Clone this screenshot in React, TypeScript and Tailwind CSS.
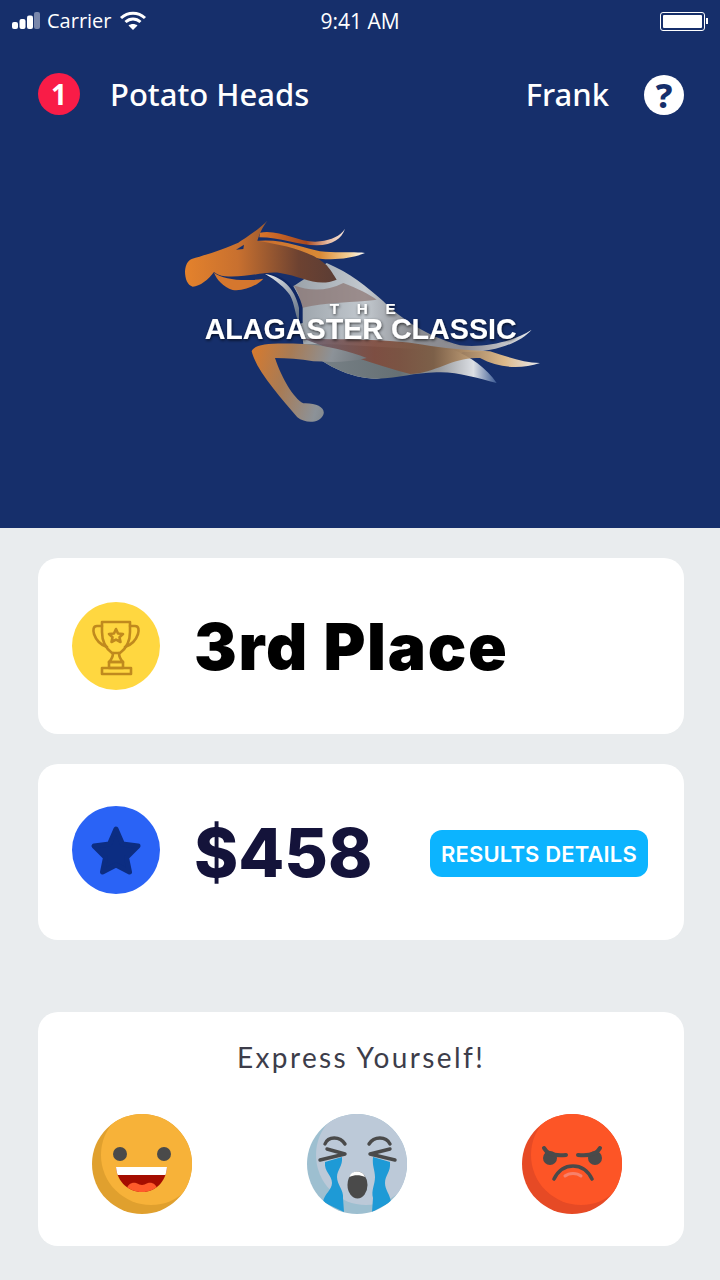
const FACE_DARK = "#4a4a4a";

function Horse() {
  return (
    <svg viewBox="0 0 1140 675" className="block w-[380px] h-[225px]">
      <defs>
        <linearGradient id="neck" x1="0" y1="0" x2="1" y2="0">
          <stop offset="0" stopColor="#e4822c" />
          <stop offset="0.35" stopColor="#c8702f" />
          <stop offset="0.75" stopColor="#6d4231" />
          <stop offset="1" stopColor="#5b3d35" />
        </linearGradient>
        <linearGradient id="maneA" x1="0" y1="0" x2="1" y2="0">
          <stop offset="0" stopColor="#d9762a" />
          <stop offset="0.55" stopColor="#a9491f" />
          <stop offset="0.8" stopColor="#e6b9a0" />
          <stop offset="1" stopColor="#f6e6dc" />
        </linearGradient>
        <linearGradient id="maneB" x1="0" y1="0" x2="1" y2="0">
          <stop offset="0" stopColor="#c9692b" />
          <stop offset="0.6" stopColor="#d98a36" />
          <stop offset="0.85" stopColor="#f3cf95" />
          <stop offset="1" stopColor="#ffffff" />
        </linearGradient>
        <linearGradient id="body" x1="0" y1="0" x2="1" y2="0">
          <stop offset="0" stopColor="#9aa2a9" />
          <stop offset="0.3" stopColor="#c3c9cf" />
          <stop offset="0.5" stopColor="#8b8d92" />
          <stop offset="0.72" stopColor="#8d8b90" />
          <stop offset="1" stopColor="#e6e9ed" />
        </linearGradient>
        <linearGradient id="belly" x1="0" y1="0" x2="1" y2="0">
          <stop offset="0" stopColor="#7b848a" />
          <stop offset="0.5" stopColor="#667074" />
          <stop offset="0.7" stopColor="#979a9e" />
          <stop offset="0.88" stopColor="#dcdfe4" />
          <stop offset="1" stopColor="#3b5a94" />
        </linearGradient>
        <linearGradient id="tail" x1="0" y1="0" x2="1" y2="0">
          <stop offset="0" stopColor="#6a5f70" />
          <stop offset="0.3" stopColor="#7f4a3c" />
          <stop offset="0.55" stopColor="#7a5a40" />
          <stop offset="0.85" stopColor="#f2c88d" />
          <stop offset="1" stopColor="#ffffff" />
        </linearGradient>
        <linearGradient id="leg" x1="0" y1="0" x2="1" y2="0.2">
          <stop offset="0" stopColor="#d97a2c" />
          <stop offset="0.35" stopColor="#a87b55" />
          <stop offset="0.7" stopColor="#8c9298" />
          <stop offset="1" stopColor="#6f767b" />
        </linearGradient>
        <linearGradient id="chest" x1="0" y1="0" x2="1" y2="1">
          <stop offset="0" stopColor="#eef0f2" />
          <stop offset="1" stopColor="#5c6b7e" />
        </linearGradient>
        <filter id="logoShadow" x="-5%" y="-20%" width="110%" height="150%">
          <feDropShadow dx="2" dy="4" stdDeviation="4" floodColor="#000" floodOpacity="0.7" />
        </filter>
      </defs>

      {/* gray body + top of the tail */}
      <path d="M470 165 C540 195 590 235 640 280 C690 330 770 385 870 412 C950 420 1030 400 1085 365 C1050 405 970 435 880 432 C800 470 700 500 620 512 C545 512 450 470 400 408 L392 345 C398 300 385 260 370 235 C400 215 440 190 470 165Z" fill="url(#body)" />
      <path d="M370 232 C420 250 470 250 520 225 C560 240 600 260 620 275 C550 285 470 280 395 300 C392 275 385 250 370 232Z" fill="#8a7470" opacity="0.7" />

      {/* back legs */}
      <path d="M400 408 C450 470 545 512 620 512 C690 510 730 495 800 493 C860 490 920 510 980 525 C950 480 900 445 850 425 C740 430 560 405 400 408Z" fill="url(#belly)" />

      {/* dark streak running out to the tail */}
      <path d="M400 392 C520 395 640 390 760 410 C820 420 880 425 960 430 C1010 445 1060 465 1110 465 C1050 485 985 480 930 450 C850 445 800 495 720 498 C620 470 500 430 400 392Z" fill="url(#tail)" opacity="0.9" />

      {/* front leg */}
      <path d="M245 430 C252 408 300 404 400 408 C470 412 540 430 590 450 C530 465 480 462 430 460 C390 452 350 450 315 450 C335 510 370 570 400 586 C440 584 468 600 460 620 C447 648 405 646 382 628 C330 565 260 490 245 430Z" fill="url(#leg)" />

      {/* chest band */}
      <path d="M280 195 C335 195 385 235 398 300 L398 345 C385 350 388 340 385 310 C375 265 340 225 290 205Z" fill="#0f2763" />
      <path d="M285 198 C335 205 375 240 387 300 L387 345 C375 320 375 290 360 262 C345 240 320 218 285 198Z" fill="url(#chest)" />

      {/* mane */}
      <path d="M270 74 C330 62 390 108 450 100 C485 95 510 85 525 62 C515 92 490 110 440 112 C385 112 330 88 268 88Z" fill="url(#maneA)" />
      <path d="M250 100 C330 88 400 120 450 130 C500 136 550 130 585 135 C550 150 500 157 450 152 C400 145 330 110 250 112Z" fill="url(#maneB)" />

      {/* head and neck */}
      <path d="M45 190 C47 170 53 158 65 153 C110 140 170 120 205 104 C225 90 270 62 292 38 C275 60 268 80 262 98 C340 112 420 125 470 172 C485 190 490 200 500 215 C440 240 400 205 330 195 C290 188 230 210 165 205 C150 203 140 198 132 192 C115 215 90 235 68 236 C52 232 45 212 45 190Z" fill="url(#neck)" />
      <path d="M198 125 L222 110 L220 123Z" fill="#162f6b" />
      <path d="M132 194 C160 214 220 222 280 212 C260 235 220 250 188 246 C160 236 140 215 132 194Z" fill="#d5772e" />

      <text x="605" y="317" textAnchor="middle" fill="#fff" fontFamily="'Liberation Sans', sans-serif" fontWeight="700" fontSize="46" letterSpacing="53" filter="url(#logoShadow)">THE</text>
      <text x="572" y="392" textAnchor="middle" fill="#fff" fontFamily="'Liberation Sans', sans-serif" fontWeight="700" fontSize="86" filter="url(#logoShadow)">ALAGASTER CLASSIC</text>
    </svg>
  );
}

function Trophy() {
  return (
    <svg viewBox="0 0 88 88" className="w-[88px] h-[88px]" fill="none" stroke="#c08a1e" strokeWidth="2.6" strokeLinejoin="round" strokeLinecap="round">
      <path d="M30 20 H58 V30 C58 41 52 48 48 51 H40 C36 48 30 41 30 30Z" />
      <path d="M30 24 H25 C21 24 21 28 22 32 C24 38 29 43 35 45" />
      <path d="M58 24 H63 C67 24 67 28 66 32 C64 38 59 43 53 45" />
      <path d="M41 51 C41 55 40 57 37 60 H51 C48 57 47 55 47 51" />
      <path d="M37 60 H51 V66 H37Z" />
      <path d="M30 66 H59 V72 H30Z" />
      <path d="M44 27 L46 31.5 L51 32 L47.5 35.2 L48.5 40 L44 37.6 L39.5 40 L40.5 35.2 L37 32 L42 31.5Z" />
    </svg>
  );
}

function Star() {
  return (
    <svg viewBox="0 0 88 88" className="w-[88px] h-[88px]">
      <path d="M44 23 L50.500 38 L66 40 L54.500 51.500 L57.500 66 L44 59 L30.500 66 L33.500 51.500 L22 40 L37.500 38Z" fill="#0c2d82" stroke="#0c2d82" strokeWidth="5" strokeLinejoin="round" />
    </svg>
  );
}

function Happy() {
  return (
    <svg viewBox="0 0 100 100" className="w-[100px] h-[100px]">
      <defs>
        <clipPath id="clipHappy"><circle cx="50" cy="50" r="50" /></clipPath>
        <clipPath id="mouthHappy"><path d="M24 53 H75 C74 68 63 78 50 78 C37 78 25 68 24 53Z" /></clipPath>
      </defs>
      <circle cx="50" cy="50" r="50" fill="#e0a02e" />
      <circle cx="59" cy="41" r="50" fill="#f7b239" clipPath="url(#clipHappy)" />
      <circle cx="28" cy="40" r="7" fill={FACE_DARK} />
      <circle cx="72" cy="40" r="7" fill={FACE_DARK} />
      <g clipPath="url(#mouthHappy)">
        <rect x="20" y="50" width="60" height="30" fill="#a50d00" />
        <rect x="20" y="50" width="60" height="11" fill="#fff" />
        <path d="M34 80 C34 70 40 68 44 69 C47 70 48 71 50 71 C52 71 53 70 56 69 C60 68 66 70 66 80Z" fill="#ff5a2a" />
      </g>
    </svg>
  );
}

function Crying() {
  return (
    <svg viewBox="0 0 100 100" className="w-[100px] h-[100px]">
      <defs>
        <clipPath id="clipCry"><circle cx="50" cy="50" r="50" /></clipPath>
      </defs>
      <circle cx="50" cy="50" r="50" fill="#9dbfd0" />
      <circle cx="59" cy="41" r="50" fill="#bcc9d8" clipPath="url(#clipCry)" />
      <g clipPath="url(#clipCry)" fill="#1e9ad6">
        <path d="M18 48 L35 43 C36 52 30 56 30 63 C30 71 37 76 36 84 L37 98 L16 88 C17 80 25 76 25 69 C25 61 17 58 18 48Z" />
        <path d="M83 48 L66 43 C65 52 68 56 68 63 C68 71 64 76 66 84 L65 98 L84 88 C83 80 78 76 78 69 C78 61 84 58 83 48Z" />
      </g>
      <g fill="none" stroke={FACE_DARK} strokeWidth="3.4" strokeLinecap="round" strokeLinejoin="round">
        <path d="M18 30 C21 22 33 22 38 30" />
        <path d="M62 30 C67 22 79 22 83 30" />
        <path d="M20 35 L38 40 L13 46" />
        <path d="M83 35 L63 40 L88 46" />
      </g>
      <ellipse cx="50.500" cy="71" rx="10" ry="13.500" fill={FACE_DARK} />
      <path d="M42.500 63 C44 58 48 57.500 50 57.500 C53 57.500 57 59 58 63 C53 60.500 47 60.500 42.500 63Z" fill="#fff" />
    </svg>
  );
}

function Angry() {
  return (
    <svg viewBox="0 0 100 100" className="w-[100px] h-[100px]">
      <defs>
        <clipPath id="clipAngry"><circle cx="50" cy="50" r="50" /></clipPath>
      </defs>
      <circle cx="50" cy="50" r="50" fill="#e64a25" />
      <circle cx="59" cy="41" r="50" fill="#fd5526" clipPath="url(#clipAngry)" />
      <circle cx="28" cy="44" r="7" fill={FACE_DARK} />
      <circle cx="73" cy="44" r="7" fill={FACE_DARK} />
      <g fill="none" strokeLinecap="round">
        <path d="M22 34 C25 40 34 42 44 41" stroke={FACE_DARK} strokeWidth="4" />
        <path d="M78 34 C75 40 66 42 56 41" stroke={FACE_DARK} strokeWidth="4" />
        <path d="M32 65 C37 55 44 52 51 52 C58 52 65 55 70 65" stroke={FACE_DARK} strokeWidth="3.600" />
        <path d="M43 62 C47 58.500 55 58.500 59 62" stroke="#f7816b" strokeWidth="3" />
      </g>
    </svg>
  );
}

export default function App() {
  return (
    <div className="w-[720px] h-[1280px] bg-[#e9ecee] overflow-hidden">
      <section className="h-[528px] bg-[#162f6b] text-white">
        {/* status bar */}
        <div className="h-[42px] flex items-center justify-between px-[12px] font-['Open_Sans',sans-serif]">
          <div className="flex items-center w-[200px]">
            <svg width="28" height="20" viewBox="0 0 28 20" fill="#fff">
              <rect x="0" y="11" width="6" height="7" rx="2" />
              <rect x="7.500" y="8" width="6" height="10" rx="2" />
              <rect x="15" y="4.500" width="6" height="13.500" rx="2" />
              <rect x="22" y="1" width="6" height="17" rx="2" fill="#7886ab" />
            </svg>
            <span className="ml-[7px] text-[20px] leading-none">Carrier</span>
            <svg width="28" height="20" viewBox="0 0 28 20" className="ml-[7px]" fill="none" stroke="#fff" strokeWidth="3">
              <path d="M2 7 C9 0.500 19 0.500 26 7" />
              <path d="M6.500 11 C11 7 17 7 21.500 11" />
              <path d="M14 19 L9.500 14.500 C12 12.500 16 12.500 18.500 14.500Z" fill="#fff" stroke="none" />
            </svg>
          </div>
          <span className="text-[21px] leading-none">9:41 AM</span>
          <div className="w-[200px] flex justify-end items-center">
            <div className="w-[45px] h-[19px] border border-white rounded-[3px] p-[2px]">
              <div className="w-full h-full bg-white rounded-[1px]" />
            </div>
            <div className="w-[2px] h-[6px] bg-white ml-px" />
          </div>
        </div>

        {/* header */}
        <div className="mt-[31px] pl-[38px] pr-[36px] flex items-center font-['Noto_Sans',sans-serif]">
          <div className="w-[42px] h-[42px] rounded-full bg-[#f91c47] flex items-center justify-center text-[28px] font-bold leading-none">1</div>
          <span className="ml-[30px] text-[31px] leading-none font-medium">Potato Heads</span>
          <span className="ml-auto text-[31px] leading-none font-medium">Frank</span>
          <div className="ml-[35px] mt-[2px] w-[40px] h-[40px] rounded-full bg-white flex items-center justify-center text-[#162f6b] text-[34px] font-extrabold leading-none">?</div>
        </div>

        {/* logo */}
        <div className="mt-[93px] ml-[170px] w-[380px]">
          <Horse />
        </div>
      </section>

      <main className="pl-[38px] pr-[36px]">
        <div className="mt-[30px] h-[176px] bg-white rounded-[20px] flex items-center pl-[34px]">
          <div className="w-[88px] h-[88px] rounded-full bg-[#ffd740] shrink-0">
            <Trophy />
          </div>
          <span className="ml-[34px] mt-[2px] text-[64px] tracking-[1.7px] leading-none font-black text-black font-['Inter',sans-serif]">3rd Place</span>
        </div>

        <div className="mt-[30px] h-[176px] bg-white rounded-[20px] flex items-start pl-[34px] pr-[36px]">
          <div className="mt-[42px] w-[88px] h-[88px] rounded-full bg-[#2a63f6] shrink-0">
            <Star />
          </div>
          <span className="ml-[34px] mt-[55px] text-[67px] leading-none font-extrabold text-[#14133a] font-['Inter',sans-serif]">$458</span>
          <div className="ml-auto mt-[66px] w-[218px] h-[47px] rounded-[12px] bg-[#0cb4ff] text-white flex items-center justify-center pt-[2px] text-[22px] font-semibold tracking-[0.15px] font-['Inter',sans-serif]">RESULTS DETAILS</div>
        </div>

        <div className="mt-[72px] h-[234px] bg-white rounded-[20px] pt-[27px]">
          <p className="text-center text-[28px] leading-[36px] tracking-[2.4px] text-[#3d3d4a] font-['Lato',sans-serif]">Express Yourself!</p>
          <div className="mt-[39px] flex justify-between pl-[54px] pr-[62px]">
            <Happy />
            <Crying />
            <Angry />
          </div>
        </div>
      </main>
    </div>
  );
}
